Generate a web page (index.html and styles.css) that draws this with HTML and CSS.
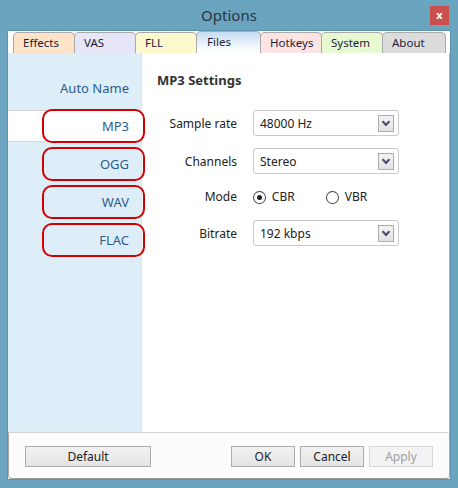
FILE: index.html
```html
<!DOCTYPE html>
<html>
<head>
	<meta http-equiv="content-type" content="text/html; charset=utf-8" />
	<title>Options</title>
	<link rel="stylesheet" href="styles.css">
</head>
<body>
	<div class="window">
		<div class="titlebar">
			<span></span>
			<span class="title">Options</span>
			<span class="close">x</span>
		</div>

		<div class="client">
			<div class="tabs">
				<div class="tab tab-effects">Effects</div>
				<div class="tab tab-vas">VAS</div>
				<div class="tab tab-fll">FLL</div>
				<div class="tab tab-files active">Files</div>
				<div class="tab tab-hotkeys">Hotkeys</div>
				<div class="tab tab-system">System</div>
				<div class="tab tab-about">About</div>
			</div>

			<div class="page">
				<!-- Format list on the left -->
				<div class="side">
					<div class="item">Auto Name</div>
					<div class="item selected marked">MP3</div>
					<div class="item marked">OGG</div>
					<div class="item marked">WAV</div>
					<div class="item marked">FLAC</div>
				</div>

				<div class="pane">
					<h2>MP3 Settings</h2>
					<div class="form">
						<label>Sample rate</label>
						<div class="select"><span>48000 Hz</span><span class="drop"></span></div>

						<label>Channels</label>
						<div class="select"><span>Stereo</span><span class="drop"></span></div>

						<label class="short">Mode</label>
						<div class="radios short">
							<span class="radio checked"></span><span class="radio-text">CBR</span>
							<span class="radio"></span><span class="radio-text">VBR</span>
						</div>

						<label>Bitrate</label>
						<div class="select"><span>192 kbps</span><span class="drop"></span></div>
					</div>
				</div>
			</div>

			<div class="footer">
				<button type="button" class="btn-default">Default</button>
				<span class="spacer"></span>
				<button type="button">OK</button>
				<button type="button">Cancel</button>
				<button type="button" disabled>Apply</button>
			</div>
		</div>
	</div>
</body>
</html>
```

FILE: styles.css
```css
body {
	margin: 0;
	padding: 0;
	font-family: "Noto Sans", "Open Sans", sans-serif;
	font-size: 12px;
	background-color: #6aa4bf;
	color: #222;
}

.window {
	width: 458px;
	height: 488px;
	display: flex;
	flex-direction: column;
}

/* Title bar */
.titlebar {
	height: 31px;
	display: grid;
	grid-template-columns: 1fr auto 1fr;
	align-items: start;
}

.title {
	margin-top: 5px;
	font-size: 15px;
	color: #2a3440;
}

.close {
	justify-self: end;
	margin: 6px 9px 0 0;
	width: 19px;
	height: 19px;
	background-color: #c9504c;
	color: #fff;
	font-weight: bold;
	font-size: 11px;
	line-height: 17px;
	text-align: center;
}

/* White client area */
.client {
	flex: 1;
	margin: 0 8px 9px 8px;
	background-color: #fff;
	display: flex;
	flex-direction: column;
	box-shadow: 0 0 0 1px #5c94ae;
}

/* Tabs */
.tabs {
	height: 22px;
	display: flex;
	align-items: flex-end;
	padding-left: 5px;
}

.tab {
	box-sizing: border-box;
	height: 21px;
	width: 62px;
	margin-right: -1px;
	padding-left: 9px;
	border: 1px solid #a9a9a9;
	border-bottom: none;
	border-radius: 5px 5px 0 0;
	font-size: 11.5px;
	line-height: 20px;
	color: #1c1c3a;
}

.tab-effects { background-color: #fde3c7; }
.tab-vas { background-color: #e6e6f8; }
.tab-fll { background-color: #fdf9cf; }
.tab-hotkeys { background-color: #fde3e3; }
.tab-system { background-color: #e7f9d0; }
.tab-about { background-color: #dcdcdc; width: 64px; }

.tab-files {
	width: 65px;
	padding-left: 10px;
	height: 22px;
	background: linear-gradient(#c4ddf2, #ffffff 90%);
	line-height: 19px;
}

/* Tab page */
.page {
	flex: 1;
	display: flex;
	border-right: 1px solid #b5b5b5;
}

.side {
	width: 133px;
	padding-top: 19px;
	background-color: #deeef8;
	border-right: 1px solid #e3e3e3;
	display: flex;
	flex-direction: column;
	gap: 6px;
	position: relative;
	z-index: 1;
}

.item {
	position: relative;
	box-sizing: border-box;
	height: 32px;
	line-height: 32px;
	padding-right: 12px;
	text-align: right;
	font-size: 13px;
	color: #2d5c8c;
}

.item.selected {
	background-color: #fff;
	border-top: 1px solid #d6d6d6;
	border-bottom: 1px solid #d6d6d6;
	line-height: 30px;
	margin-right: -1px;
	padding-right: 13px;
}

/* Red annotation outline over the format items */
.item.marked::after {
	content: "";
	position: absolute;
	top: -1px;
	bottom: -1px;
	left: 34px;
	right: -4px;
	border: 2px solid #d20000;
	border-radius: 10px;
}

.item.selected.marked::after {
	top: -2px;
	bottom: -2px;
	right: -3px;
}

.pane {
	flex: 1;
	padding: 18px 0 0 15px;
}

.pane h2 {
	margin: 0 0 21px 0;
	font-size: 13px;
	font-weight: bold;
	line-height: 18px;
	color: #333;
}

.form {
	display: grid;
	grid-template-columns: 80px 146px;
	column-gap: 16px;
	row-gap: 12px;
	align-items: center;
}

.form label {
	text-align: right;
	color: #222;
}

.select {
	box-sizing: border-box;
	height: 26px;
	border: 1px solid #cacaca;
	border-radius: 3px;
	display: flex;
	align-items: center;
	padding: 0 4px 0 6px;
}

.select span:first-child {
	flex: 1;
}

.drop {
	box-sizing: border-box;
	width: 16px;
	height: 17px;
	border: 1px solid #acacac;
	background: linear-gradient(#f3f3f3, #e2e2e2);
	position: relative;
}

.drop::after {
	content: "";
	position: absolute;
	left: 4px;
	top: 3px;
	width: 4px;
	height: 4px;
	border-right: 2px solid #4c4c70;
	border-bottom: 2px solid #4c4c70;
	transform: rotate(45deg);
}

.short {
	height: 22px;
	line-height: 22px;
}

.radios {
	display: flex;
	align-items: center;
}

.radio {
	box-sizing: border-box;
	width: 13px;
	height: 13px;
	border: 1px solid #444;
	border-radius: 50%;
	background-color: #fff;
	position: relative;
}

.radio.checked::after {
	content: "";
	position: absolute;
	left: 3px;
	top: 3px;
	width: 5px;
	height: 5px;
	border-radius: 50%;
	background-color: #222;
}

.radio-text {
	margin-left: 6px;
	width: 55px;
}

/* Footer with buttons */
.footer {
	height: 47px;
	box-sizing: border-box;
	border-top: 1px solid #d3d3d3;
	border-left: 1px solid #a8a8a8;
	border-right: 1px solid #a8a8a8;
	border-bottom: 1px solid #9a9a9a;
	border-radius: 0 0 4px 4px;
	background-color: #fcfcfc;
	display: flex;
	align-items: flex-start;
	gap: 5px;
	padding: 13px 16px 0 16px;
}

.spacer {
	flex: 1;
}

button {
	box-sizing: border-box;
	width: 64px;
	height: 21px;
	padding: 0;
	border: 1px solid #acacac;
	background: linear-gradient(#f1f1f1, #e4e4e4);
	font-family: "Noto Sans", "Open Sans", sans-serif;
	font-size: 12px;
	color: #222;
}

.btn-default {
	width: 126px;
}

button:disabled {
	border-color: #d6d6d6;
	background: #f3f3f3;
	color: #a0a0a0;
}
```
